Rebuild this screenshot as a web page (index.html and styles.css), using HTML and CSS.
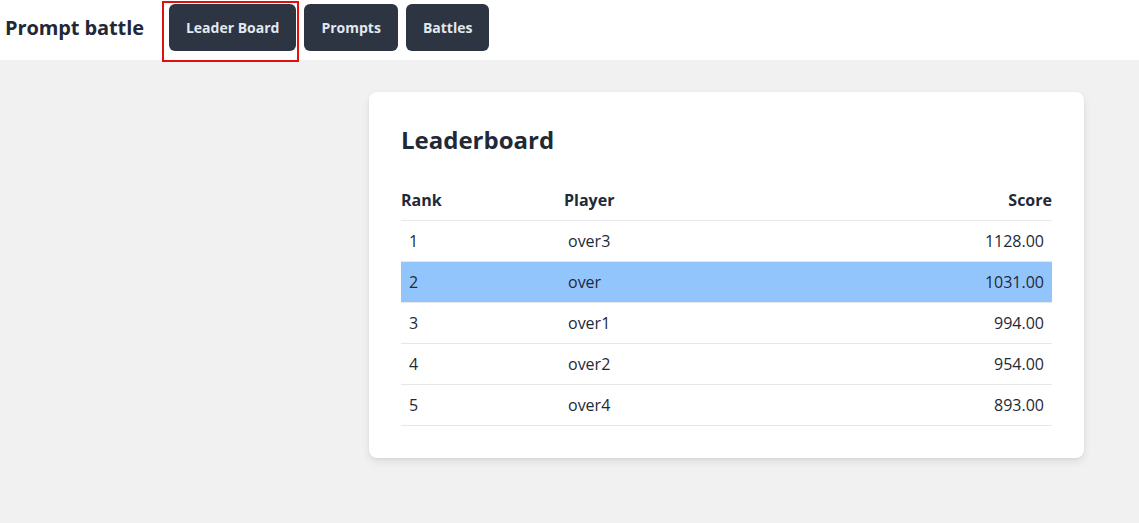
FILE: index.html
```html
<!DOCTYPE html>
<html lang="en">
<head>
<meta charset="utf-8">
<title>Prompt battle</title>
<link rel="stylesheet" href="styles.css">
</head>
<body>
<header class="topbar">
  <span class="brand">Prompt battle</span>
  <nav class="nav">
    <button class="nav-btn nav-btn--active">Leader Board</button>
    <button class="nav-btn">Prompts</button>
    <button class="nav-btn">Battles</button>
  </nav>
</header>
<main class="page">
  <section class="card">
    <h1 class="card-title">Leaderboard</h1>
    <table class="board">
      <thead>
        <tr><th class="col-rank">Rank</th><th class="col-player">Player</th><th class="col-score">Score</th></tr>
      </thead>
      <tbody>
        <tr><td>1</td><td>over3</td><td class="num">1128.00</td></tr>
        <tr class="is-me"><td>2</td><td>over</td><td class="num">1031.00</td></tr>
        <tr><td>3</td><td>over1</td><td class="num">994.00</td></tr>
        <tr><td>4</td><td>over2</td><td class="num">954.00</td></tr>
        <tr><td>5</td><td>over4</td><td class="num">893.00</td></tr>
      </tbody>
    </table>
  </section>
</main>
</body>
</html>
```

FILE: styles.css
```css
* { box-sizing: border-box; }
html, body { margin: 0; padding: 0; }
body {
  font-family: "Open Sans", "Noto Sans", sans-serif;
  color: #1f2937;
  background: #f1f1f1;
  min-height: 523px;
}
.topbar {
  height: 60px;
  background: #ffffff;
  display: flex;
  align-items: flex-start;
  padding: 4px 5px 0;
}
.brand {
  font-size: 20px;
  font-weight: 700;
  line-height: 47px;
  letter-spacing: -0.1px;
  color: #1f2937;
  margin-right: 25px;
}
.nav { display: flex; gap: 8px; }
.nav-btn {
  font-family: inherit;
  height: 47px;
  padding: 0 17px;
  border: none;
  border-radius: 6px;
  background: #2d3442;
  color: #e2e8f0;
  font-size: 14px;
  font-weight: 700;
  cursor: pointer;
}
.nav-btn--active { position: relative; }
.nav-btn--active::after {
  content: "";
  position: absolute;
  left: -7px;
  top: -3px;
  right: -3px;
  bottom: -11px;
  border: 2px solid #e01010;
  pointer-events: none;
}
.page {
  padding: 32px 55px 0 369px;
}
.card {
  background: #ffffff;
  border-radius: 8px;
  padding: 32px;
  box-shadow: 0 4px 8px rgba(0,0,0,0.08), 0 1px 3px rgba(0,0,0,0.06);
}
.card-title {
  margin: 0 0 32px;
  font-size: 24px;
  font-weight: 700;
  line-height: 32px;
}
.board {
  width: 100%;
  border-collapse: collapse;
  font-size: 16px;
}
.board th {
  text-align: left;
  font-weight: 700;
  padding: 0 0 8px;
  line-height: 24px;
  border-bottom: 1px solid #e5e7eb;
}
.board th.col-rank { width: 163px; }
.board th.col-score { text-align: right; }
.board td {
  padding: 8px;
  line-height: 24px;
  border-bottom: 1px solid #e5e7eb;
}
.board td:nth-child(2) { padding-left: 4px; }
.board td.num { text-align: right; }
.board tr.is-me td { background: #93c5fd; }
```
